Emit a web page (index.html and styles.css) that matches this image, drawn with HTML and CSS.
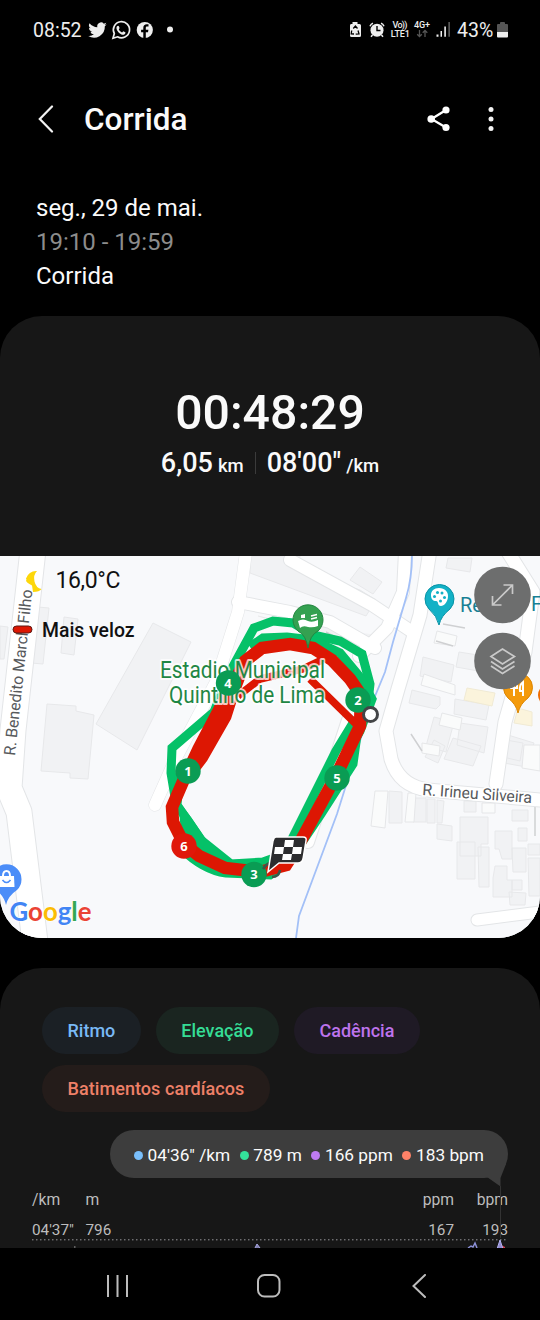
FILE: index.html
```html
<!DOCTYPE html>
<html lang="pt-BR">
<head>
<meta charset="utf-8">
<title>Corrida</title>
<link rel="stylesheet" href="styles.css">
</head>
<body>
<div class="screen">
  <div class="status">
    <span class="clock">08:52</span>
    <svg class="status-left" viewBox="84 16 92 28" fill="#eee">
      <path transform="translate(88.500 20.500) scale(.77)" d="M23.600 4.900a9.900 9.900 0 0 1-2.800.8 4.900 4.900 0 0 0 2.200-2.700 9.900 9.900 0 0 1-3.100 1.200 4.900 4.900 0 0 0-8.400 4.500A14 14 0 0 1 1.400 3.500a4.900 4.900 0 0 0 1.500 6.600 4.900 4.900 0 0 1-2.200-.6 4.900 4.900 0 0 0 3.900 4.900 4.900 4.900 0 0 1-2.200.1 4.900 4.900 0 0 0 4.600 3.400A9.900 9.900 0 0 1-.3 20a14 14 0 0 0 21.500-12.500 10 10 0 0 0 2.400-2.600z"/>
      <path d="M113 38.200l1.300-4.700a8.100 8.100 0 1 1 3.200 3.300z" fill="none" stroke="#eee" stroke-width="1.700"/>
      <path d="M117 26.300c.7-1 1.800-.7 2 .1l.6 1.600-.8 1.400c.8 1.500 1.900 2.400 3.300 3l1.200-1.200 2 1.100c.5.400-.2 2.100-1.500 2.400-1.600.4-3.800-.8-5.400-2.500-1.900-2-2.500-4.300-1.400-5.900z"/>
      <circle cx="144.800" cy="30" r="8.100"/>
      <path d="M143.300 38.500v-6.200h-2.200v-2.600h2.200v-1.800c0-2.400 1.300-3.600 3.500-3.600h1.700v2.300h-1.300c-1 0-1.400.5-1.400 1.400v1.700h2.600l-.4 2.600h-2.200v6.200z" fill="#000"/>
      <circle cx="170" cy="29.500" r="3"/>
    </svg>
    <svg class="status-right" viewBox="346 16 108 28" fill="#eee">
      <path d="M350.500 24h2v-2h5v2h2q1.500 0 1.500 1.500v10q0 1.500-1.500 1.500h-8q-1.500 0-1.500-1.500v-10q0-1.500 1-1.500z"/>
      <path d="M353.300 28.500l2.100-2.500 2.100 2.500M358 30.500l1 3.300-3.300.3M351.700 30.500l-.5 3.300 2.800.2" fill="none" stroke="#000" stroke-width="1.300"/>
      <circle cx="377" cy="30.200" r="6.500"/>
      <path d="M370 26.200q1-2.500 3-3M384 26.200q-1-2.500-3-3M372.500 35l-1.500 1.800M381.500 35l1.500 1.800" fill="none" stroke="#eee" stroke-width="1.500"/>
      <path d="M377 26v4.500h3.500" fill="none" stroke="#000" stroke-width="1.400"/>
      <g class="tiny"><text x="392.500" y="28" textLength="15">Vo))</text><text x="390.800" y="37" textLength="19">LTE1</text><text x="414" y="28" textLength="16">4G+</text></g>
      <path d="M419.500 30v6.500m-2.300-2.300l2.300 2.300 2.300-2.300M425 37v-6.500m-2.300 2.300l2.300-2.300 2.300 2.300" fill="none" stroke="#555" stroke-width="1.300"/>
      <path d="M436.500 34.500h2v2.200h-2zM440.500 31h1.500v5.700h-1.500zM444.300 26.500h1.600v10.200h-1.600z"/>
      <path d="M448.300 22h1.700v14.700h-1.700z" fill="#555"/>
    </svg>
    <span class="percent">43%</span>
    <svg class="battery" viewBox="0 0 12 17"><path d="M1 2h2V1q0-1 1-1h3q1 0 1 1v1h2q1 0 1 1v7H0V3q0-1 1-1z" fill="#555"/><path d="M0 10h11v4.500q0 1-1 1H1q-1 0-1-1z" fill="#eee"/></svg>
  </div>

  <header class="appbar">
    <svg class="back" viewBox="0 0 16 28"><path d="M14 1.500L1.800 14 14 26.500" fill="none" stroke="#f2f2f2" stroke-width="2.200" stroke-linecap="round"/></svg>
    <h1>Corrida</h1>
    <svg class="share" viewBox="0 0 24 26" fill="#fff"><path d="M19 4L4.500 13 19 21.500" fill="none" stroke="#fff" stroke-width="2.300"/><circle cx="19" cy="4" r="3.600"/><circle cx="4.200" cy="13" r="3.800"/><circle cx="19" cy="21.500" r="3.600"/></svg>
    <svg class="more" viewBox="0 0 6 26" fill="#f4f4f4"><circle cx="3" cy="3.500" r="2.500"/><circle cx="3" cy="13" r="2.500"/><circle cx="3" cy="22.400" r="2.500"/></svg>
  </header>

  <section class="info">
    <p>seg., 29 de mai.</p>
    <p class="muted">19:10 - 19:59</p>
    <p>Corrida</p>
  </section>

  <section class="summary">
    <div class="duration">00:48:29</div>
    <div class="metrics">
      <span class="metric">6,05<small>km</small></span>
      <span class="sep"></span>
      <span class="metric">08'00"<small>/km</small></span>
    </div>
  </section>

  <section class="map">
    <svg viewBox="0 556 540 382">
      <rect y="556" width="540" height="382" fill="#f8f9fb"/>
      <!-- buildings -->
      <g fill="#f1f2f4" stroke="#e7e8ea">
        <path d="M153 623l38 19-54 108-41-26zM47 704l29 2v5l18 4-6 64-18-1v-5l-29-2zM38 607l11 1-6 56-12-1zM64 617l14 2-4 36-13-2zM0 626l8 1-4 32h-4zM360 567l22 15-9 12-23-14zM448 558h24l-2 14-24-4zM423 657l31 8-3 17-31-6zM459 652l25 4v16l-28-5zM412 690l28 7v8l-4 4-27-6zM455 699l34 6-3 15-32-6zM434 717l20 5-8 30-20-6zM460 723l28 4-4 26-27-8zM508 735l26 8-8 24-22-4zM434 740l11 6-7 17-13-6zM453 738l28 8-8 20-29-7zM506 740l17 3-3 18-17-4zM250 556h50l-3 12 63 22 16 10-10 16-62-23-54-20zM258 616l110 30 14-10"/>
        <path d="M389 791l13 1v31h-13zM415 798h11v24h-13zM427 799h8v24h-8zM437 800l7 1-2 22h-5zM437 824l15 2v15l-15-2zM460 817h28v27h-7v12h-21zM457 842h18v37h-18zM478 847h11v40h-10zM464 801h12v11h-12zM495 831h17v28h-10l-3-10h-4zM512 848h14v24h-13zM495 866h12v14h5v17h-19v-19zM512 880h10v10h-10zM509 892l17 1-1 12h-15zM512 810h16v11h-16zM518 828h9v13h-9zM528 844h12v11h-12zM528 858h12v38h-11z"/>
      </g>
      <g fill="#fafbfb" stroke="#e5e6e8"><path d="M375 791h13l-3 37-14-2zM408 793h8l-2 29h-9zM422 743l18 3-1 10-17-3zM437 631l20 5-2 10-21-3zM442 713l20 5-2 12-21-5zM424 674l31 11v10l-34-10zM524 745h16v26l-18-3zM482 803h13v10h-13z"/></g>
      <path d="M467 688l28 5-3 13-28-6zM518 708l14 4v14l-18-3z" fill="#fbf4dc" stroke="#f0ead4"/>
      <path d="M411 734l11 17M443 624l22 4M436 641l17 5M535 800v36M326 632l22 12" stroke="#cfd0d2" stroke-width="1.500" fill="none"/>
      <!-- streets -->
      <g fill="none" stroke="#e3e5e7" stroke-linejoin="round" stroke-linecap="round">
        <path d="M33 550Q22 650 13 730L9 788l10 24 16 130" stroke-width="27"/>
        <path d="M246 552l-8 60-22 70-40 76-21 47" stroke-width="13"/>
        <path d="M238 602l52 10 40 10 45 26M290 560l82 45 42 28" stroke-width="14"/>
        <path d="M405 552l-2 40-16 36-28 28" stroke-width="14"/>
        <path d="M430 550l-10 65-22 74-12 42 5 28q8 27 37 31l112 10" stroke-width="15"/>
        <path d="M508 552l25 40-8 60-20 70-9 62" stroke-width="15"/>
        <path d="M477 920l63-8" stroke-width="13"/>
        <path d="M348 720l-40 122" stroke-width="14"/>
      </g>
      <g fill="none" stroke="#fff" stroke-linejoin="round" stroke-linecap="round">
        <path d="M33 550Q22 650 13 730L9 788l10 24 16 130" stroke-width="25"/>
        <path d="M246 552l-8 60-22 70-40 76-21 47" stroke-width="12"/>
        <path d="M238 602l52 10 40 10 45 26M290 560l82 45 42 28" stroke-width="12"/>
        <path d="M405 552l-2 40-16 36-28 28" stroke-width="12"/>
        <path d="M430 550l-10 65-22 74-12 42 5 28q8 27 37 31l112 10" stroke-width="13"/>
        <path d="M508 552l25 40-8 60-20 70-9 62" stroke-width="13"/>
        <path d="M477 920l63-8" stroke-width="11"/>
        <path d="M348 720l-40 122" stroke-width="12"/>
      </g>
      <path d="M412 556q0 22-6 42l-13 44-8 30-14 34-34 108-38 102-3 22" fill="none" stroke="#a3c0f7" stroke-width="1.800"/>
      <text class="street" transform="translate(15 756) rotate(-84)" textLength="167">R. Benedito March Filho</text>
      <text class="street" transform="translate(422 795) rotate(4.200)" textLength="110">R. Irineu Silveira</text>

      <!-- route -->
      <g fill="none" stroke="#05c168" stroke-width="9" stroke-linejoin="miter">
        <path d="M175 797l-4-24 1-25 42-36 16-40 24-44 19-7 20 2 20 12 27 6 22 13 8 30-2 18-10 22"/>
        <path d="M250 647l13-9 24-1 25 3 28 13 20 24 12 22-12 32-27 49-39 74"/>
        <path d="M356 718l-20 33-44 88M180 770l-3 35 24 35 30 24 32-2 28-10"/>
        <path d="M181 848q22 22 45 25l44 2 20-15 31-46 32-50 5-36"/>
      </g>
      <path d="M178 800l13 17 15 22 24 21 32-1 20-6-22 20-35-2-43-28z" fill="#05c168"/>
      <path d="M227 697l18-36 17-13 28-4 23 4 19 12 18 19 11 16-1 31-24 50-38 70-12 19-26 7-35-4-26-12-15-12-11-22-1-15 16-37" fill="none" stroke="#dd1703" stroke-width="12.500"/>
      <path d="M222 691l22-32 7 4-13 34-7 22-24 42-16 21-12-6 14-30z" fill="#dd1703"/>
      <path d="M238 696l22-17 43-10 19-9M310 679l47 46" fill="none" stroke="#dd1703" stroke-width="7.500"/>

      <!-- stadium pin and label -->
      <path d="M308 648q-2-13-10-17a15 15 0 1 1 20 0q-8 4-10 17z" fill="#34a151" stroke="#238540"/>
      <path d="M301 615l4-1v4h-4zM298 621q5-3 10 0 4 2 10-1v6q-5 2-10 1-5-2-8 1z" fill="#fff"/>
      <path d="M311 616l6-1.500M311 619l6-1.500" stroke="#fff" stroke-width="1.500"/>
      <g class="place">
        <text x="160" y="678" textLength="165" lengthAdjust="spacingAndGlyphs">Estadio Municipal</text>
        <text x="169" y="703" textLength="156" lengthAdjust="spacingAndGlyphs">Quintino de Lima</text>
      </g>

      <g fill="#0a9c54"><circle cx="188" cy="771" r="12.700"/><circle cx="358" cy="700" r="12.700"/><circle cx="254" cy="874.500" r="12.700"/><circle cx="228.500" cy="683" r="12.700"/><circle cx="337" cy="778" r="12.700"/></g>
      <circle cx="184" cy="846" r="12.700" fill="#e0180a"/>
      <g class="lap">
        <text x="188" y="775.500">1</text><text x="358" y="704.500">2</text><text x="254" y="879">3</text><text x="228" y="687.500">4</text><text x="337" y="782.500">5</text><text x="184" y="850.500">6</text>
      </g>
      <circle cx="370.500" cy="714.500" r="7" fill="#fff" stroke="#434547" stroke-width="3"/>
      <path d="M263 869q7-10 14-5M272 877q7 0 8-7" stroke="#37594b" stroke-width="2.500" fill="none"/>
      <path d="M276 837h27q4 0 3 4l-3 18q-1 4-5 4h-19l-11 9 5-31q1-4 3-4z" fill="#2d2d2f" stroke="#fff" stroke-width="1.500"/>
      <path d="M285 840h9l-1 7h-9zM275 847h9l-1 7h-9zM293 847h9l-1 7h-9zM283 854h9l-1 6h-9z" fill="#fff"/>

      <!-- points of interest -->
      <path d="M439 625q-2-9-10-16a14.500 14.500 0 1 1 21 0q-9 7-11 16z" fill="#12b1c6" stroke="#0892a5"/>
      <path d="M439 588c6 0 9 4 9 8 0 6-4 10-7 10-4 0-2-5-5-5s-5-2-5-6c0-4 3-7 8-7z" fill="#fff"/>
      <g fill="#12b1c6"><circle cx="434.500" cy="596.500" r="1.500"/><circle cx="437.500" cy="592.500" r="1.500"/><circle cx="442" cy="593" r="1.500"/><circle cx="444.500" cy="597.500" r="1.500"/><circle cx="440.500" cy="601" r="1.500"/></g>
      <g class="poi"><text x="460" y="612">Re</text><text x="531" y="611">F</text></g>
      <path d="M518 713q-2-9-10-15a14.500 14.500 0 1 1 20 0q-8 6-10 15z" fill="#f49a0b" stroke="#dc8604"/>
      <path d="M514 680v16M511 682v6h6v-6M523 696v-14q-4 3-3 9h3" fill="none" stroke="#fff" stroke-width="2"/>
      <circle cx="549" cy="695" r="11" fill="#ef6c00"/>
      <path d="M6 905q-2-9-10-15a15 15 0 1 1 21 0q-9 6-11 15z" fill="#4b8df8"/>
      <path d="M-1 876h15l.5 11H-1.500z" fill="#fff"/><path d="M3 876q0-5 3.500-5t3.500 5" fill="none" stroke="#fff" stroke-width="2"/><path d="M2.500 880q4 5 8 0" fill="none" stroke="#4b8df8" stroke-width="1.600"/>
      <text class="google" x="9.500" y="921" textLength="82" lengthAdjust="spacingAndGlyphs"><tspan fill="#4285f4">G</tspan><tspan fill="#ea4335">o</tspan><tspan fill="#fbbc05">o</tspan><tspan fill="#4285f4">g</tspan><tspan fill="#34a853">l</tspan><tspan fill="#ea4335">e</tspan></text>

      <!-- weather and pace legend -->
      <path d="M37 571q-4 4-2.500 10.500T41.500 589q-2 3-8.500 3l-1-6.500q-6-3-6-5 1 0 0-2 3-8 11-7.500z" fill="#fdd70b"/>
      <text class="temp" x="55.500" y="588" textLength="65">16,0°C</text>
      <rect x="13" y="626" width="19" height="7" rx="3.500" fill="#dd1703" stroke="#5c1b16"/>
      <text class="legend" x="42" y="637" textLength="92.500" lengthAdjust="spacingAndGlyphs">Mais veloz</text>

      <!-- map controls -->
      <g fill="#6d6e6e"><circle cx="502.500" cy="595" r="28.300"/><circle cx="502.500" cy="661" r="28.300"/></g>
      <g fill="none" stroke="#c9c9c9" stroke-width="1.700"><path d="M492.500 605l20-20M503.500 585h9v9M492.500 596v9h9"/><path d="M491 656.500l11.500-7.500 12 7.500-12 7.500zM491 661.500l11.500 7.500 12-7.500M491 666l11.500 7.500 12-7.500"/></g>
    </svg>
  </section>

  <section class="chart-card">
    <div class="chips">
      <span class="chip pace">Ritmo</span>
      <span class="chip elevation">Elevação</span>
      <span class="chip cadence">Cadência</span>
      <span class="chip heart">Batimentos cardíacos</span>
    </div>
    <div class="tooltip">
      <span class="value pace">04'36" /km</span>
      <span class="value elevation">789 m</span>
      <span class="value cadence">166 ppm</span>
      <span class="value heart">183 bpm</span>
      <svg class="tail" viewBox="0 0 20 82"><path d="M0 0h19l-5.500 14v8.500L0 13z" fill="#3d3d3d"/><path d="M13.500 22v52" stroke="#333"/></svg>
    </div>
    <div class="axis units"><span>/km</span><span>m</span><span>ppm</span><span>bpm</span></div>
    <div class="axis"><span>04'37"</span><span>796</span><span>167</span><span>193</span></div>
    <svg class="plot" viewBox="0 1239 540 9">
      <path d="M32 1239.800h476" stroke="#96969a" stroke-dasharray="1.500 2.500"/>
      <path d="M74 1247h1.500" stroke="#aaa"/>
      <path d="M255 1248l2-4 3 4" fill="#8280b0" stroke="#a9a7e2"/>
      <path d="M468 1248l3-2 2 1 2-4 2 5" fill="none" stroke="#8d91d8" stroke-width="1.500"/>
      <path d="M501 1245l4 2v2h-4z" fill="#d84050"/><path d="M497 1249l3-9 3 9" fill="#938dd2" stroke="#b1b0ed"/>
    </svg>
  </section>

  <nav class="navbar">
    <svg viewBox="0 0 24 24"><path d="M2 1v22M11.500 1v22M21 1v22"/></svg>
    <svg viewBox="0 0 24 24"><rect x="1" y="1" width="21.500" height="21.500" rx="6.500"/></svg>
    <svg viewBox="0 0 24 24"><path d="M18 1L6.500 12 18 23" stroke-linecap="round"/></svg>
  </nav>
</div>
</body>
</html>
```
FILE: styles.css
```css
* { box-sizing: border-box; margin: 0; padding: 0; }
body { background: #000; color: #fafafa; font-family: Roboto, sans-serif; }
svg { display: block; flex: none; }
.screen { width: 540px; height: 1320px; display: flex; flex-direction: column; overflow: hidden; }
.status { height: 60px; display: flex; align-items: center; padding: 0 31px 0 33px; color: #eee; font-size: 19.500px; }
.clock { width: 51px; }
.status-left { width: 92px; height: 28px; }
.status-right { width: 108px; height: 28px; margin: 0 3px 0 auto; }
.tiny { font: 500 9px Roboto, sans-serif; }
.percent { width: 37px; }
.battery { width: 12px; height: 17px; margin-left: 3px; }
.appbar { height: 120px; display: flex; align-items: center; padding: 0 46px 2px 38px; }
.back { width: 16px; height: 28px; margin-right: 30px; }
.appbar h1 { flex: 1; font-size: 31.500px; font-weight: 500; padding-top: 1px; }
.share { width: 24px; height: 26px; margin-right: 37px; }
.more { width: 6px; height: 26px; }
.info { height: 136px; padding: 11px 36px; font-size: 24px; line-height: 34px; }
.muted { color: #8c8c8c; }
.summary { height: 240px; background: #171717; border-radius: 42px 42px 0 0; padding-top: 69px; text-align: center; }
.duration { font-size: 48.200px; line-height: 56px; font-weight: 500; }
.metrics { display: flex; justify-content: center; align-items: center; gap: 11px; height: 44px; }
.metric { display: flex; align-items: baseline; gap: 5px; font-size: 27px; font-weight: 500; white-space: nowrap; }
.metric small { font-size: 18.500px; font-weight: 500; }
.sep { width: 1px; height: 22px; background: #3b3b3b; }
.map { height: 382px; border-radius: 0 0 42px 42px; overflow: hidden; background: #f8f9fb; }
.map svg { width: 540px; height: 382px; }
.street { font-size: 16px; fill: #57595c; stroke: #fff; stroke-width: 3px; paint-order: stroke; }
.place { font-size: 23.500px; fill: #1f8744; stroke: rgba(255, 255, 255, .75); stroke-width: 4px; paint-order: stroke; stroke-linejoin: round; }
.lap { font: bold 13px "Open Sans", sans-serif; fill: #fff; text-anchor: middle; }
.poi { font-size: 20px; fill: #188094; }
.google { font: 700 26px Lato, sans-serif; stroke: #fff; stroke-width: 1px; paint-order: stroke; }
.temp { font-size: 23px; fill: #111; }
.legend { font-size: 20px; font-weight: 500; fill: #111; }
.chart-card { height: 280px; margin-top: 30px; background: #171717; border-radius: 42px 42px 0 0; padding-top: 39px; overflow: hidden; }
.chips { display: flex; flex-wrap: wrap; gap: 11px 15px; padding: 0 42px; }
.chip { height: 47px; line-height: 48px; padding: 0 25.500px; border-radius: 24px; font-size: 18px; font-weight: 500; }
.chip.pace { color: #79b9f5; background: #1b2025; }
.chip.elevation { color: #35dc95; background: #1a2520; }
.chip.cadence { color: #bd73ec; background: #1f1a25; }
.chip.heart { color: #ee8068; background: #241c1a; letter-spacing: .07px; }
.tooltip { position: relative; width: 398px; height: 48px; margin: 18px 0 0 110px; padding: 2px 24px 0; display: flex; align-items: center; justify-content: space-between; border-radius: 24px; background: #3d3d3d; font-size: 17.300px; white-space: nowrap; }
.value { display: flex; align-items: center; gap: 4.500px; }
.value::before { content: ""; width: 9px; height: 9px; border-radius: 50%; background: #79bffc; }
.value.elevation::before { background: #34e29b; }
.value.cadence::before { background: #bf7bf2; }
.value.heart::before { background: #ff8268; }
.tail { position: absolute; width: 20px; height: 82px; right: 1px; top: 34px; }
.axis { display: grid; grid-template-columns: 53.500px 1fr 60px 54px; padding: 0 32px; height: 30px; line-height: 30px; font-size: 15.300px; color: #bdbdbd; }
.units { height: 30px; margin-top: 7px; font-size: 15.700px; }
.axis span:nth-child(n+3) { text-align: right; }
.plot { width: 540px; height: 9px; margin-top: -6px; }
.navbar { height: 72px; display: flex; align-items: center; justify-content: space-between; padding: 3px 109px 0 106px; background: #000; }
.navbar svg { width: 24px; height: 24px; fill: none; stroke: #bcbcbc; stroke-width: 2; }
```
